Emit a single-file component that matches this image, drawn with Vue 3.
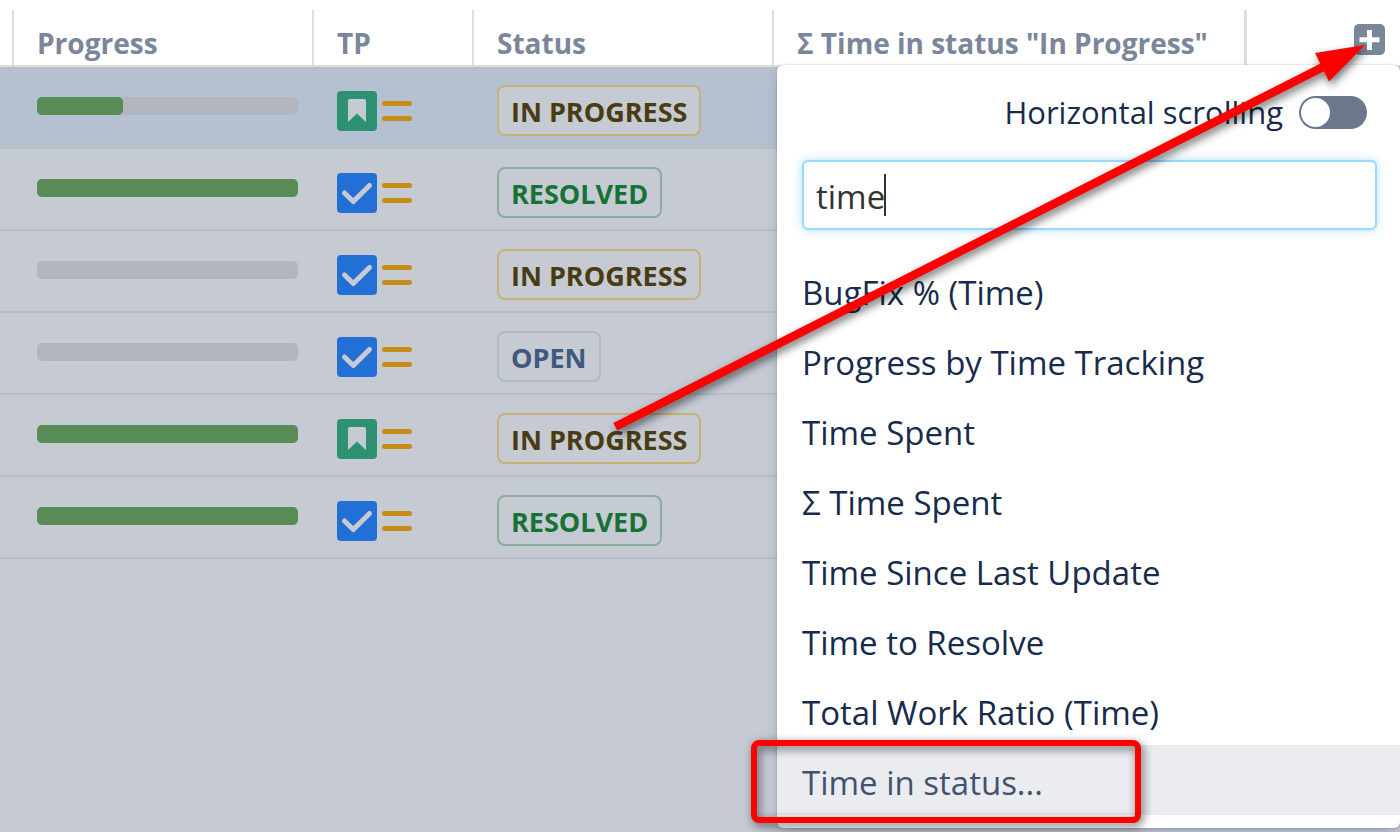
<template>
  <div class="board">
    <table class="issues">
      <colgroup>
        <col class="col-edge" />
        <col class="col-progress" />
        <col class="col-type" />
        <col class="col-status" />
        <col class="col-time" />
        <col />
      </colgroup>
      <thead>
        <tr>
          <th></th>
          <th scope="col">Progress</th>
          <th scope="col">TP</th>
          <th scope="col">Status</th>
          <th scope="col">Σ Time in status "In Progress"</th>
          <th class="add-cell">
            <button
              type="button"
              class="add-button"
              aria-label="Add column"
              @click="panelOpen = !panelOpen">
              <svg
                width="31"
                height="31"
                viewBox="0 0 31 31">
                <rect
                  width="31"
                  height="31"
                  rx="5"
                  fill="#7a869a" />
                <path
                  d="M15.500 6V26M5.500 15.800H25.500"
                  stroke="#fff"
                  stroke-width="5" />
              </svg>
            </button>
          </th>
        </tr>
      </thead>
      <tbody>
        <tr
          v-for="issue in issues"
          :key="issue.id"
          :class="{ selected: issue.id === selectedId }">
          <td></td>
          <td class="progress-cell">
            <div class="track">
              <div
                class="fill"
                :style="{ width: issue.progress + '%' }"></div>
            </div>
          </td>
          <td class="type-cell">
            <div class="icons">
              <svg
                v-if="issue.type === 'story'"
                width="40"
                height="40"
                viewBox="0 0 40 40">
                <rect
                  width="40"
                  height="40"
                  rx="4"
                  fill="#2e9272" />
                <path
                  d="M13 8H27A2 2 0 0 1 29 10V31L20 22.500L11 31V10A2 2 0 0 1 13 8Z"
                  fill="#c6cad3" />
              </svg>
              <svg
                v-else
                width="40"
                height="40"
                viewBox="0 0 40 40">
                <rect
                  width="40"
                  height="40"
                  rx="4"
                  fill="#226fd5" />
                <path
                  d="M7.500 20L16.300 28.500L32.500 12.500"
                  fill="none"
                  stroke="#c6cad3"
                  stroke-width="5"
                  stroke-linecap="round"
                  stroke-linejoin="round" />
              </svg>
              <svg
                width="30"
                height="20"
                viewBox="0 0 30 20">
                <rect
                  width="30"
                  height="5"
                  rx="2.500"
                  fill="#c68c13" />
                <rect
                  y="15"
                  width="30"
                  height="5"
                  rx="2.500"
                  fill="#c68c13" />
              </svg>
            </div>
          </td>
          <td class="status-cell">
            <span
              class="badge"
              :class="issue.status.toLowerCase().replace(' ', '-')">
              {{ issue.status }}
            </span>
          </td>
          <td></td>
          <td></td>
        </tr>
      </tbody>
    </table>

    <div
      v-show="panelOpen"
      class="panel">
      <div class="scrolling">
        <label for="horizontal-scrolling">Horizontal scrolling</label>
        <input
          id="horizontal-scrolling"
          v-model="horizontalScrolling"
          class="toggle"
          type="checkbox"
          role="switch" />
      </div>
      <div class="search">
        <input
          v-model="query"
          class="search-input"
          type="text"
          aria-label="Search columns" />
        <span class="caret"></span>
      </div>
      <ul class="options">
        <li
          v-for="column in matches"
          :key="column"
          class="option"
          :class="{ active: column === activeColumn }">
          <button type="button">{{ column }}</button>
          <span
            v-if="column === activeColumn"
            class="marker"></span>
        </li>
      </ul>
    </div>

    <svg
      class="arrow"
      width="1400"
      height="832"
      viewBox="0 0 1400 832">
      <path
        d="M615.300 426.700L1324 66.500"
        stroke="#f00"
        stroke-width="8.500" />
      <path
        d="M1365 45L1315 53L1329 81.500Z"
        fill="#f00" />
    </svg>
  </div>
</template>

<script setup>
  import { ref, computed } from "vue";

  const issues = [
    { id: 1, progress: 33, type: "story", status: "IN PROGRESS" },
    { id: 2, progress: 100, type: "task", status: "RESOLVED" },
    { id: 3, progress: 0, type: "task", status: "IN PROGRESS" },
    { id: 4, progress: 0, type: "task", status: "OPEN" },
    { id: 5, progress: 100, type: "story", status: "IN PROGRESS" },
    { id: 6, progress: 100, type: "task", status: "RESOLVED" },
  ];

  const columns = [
    "BugFix % (Time)",
    "Progress by Time Tracking",
    "Time Spent",
    "Σ Time Spent",
    "Time Since Last Update",
    "Time to Resolve",
    "Total Work Ratio (Time)",
    "Time in status...",
  ];

  const selectedId = ref(1);
  const panelOpen = ref(true);
  const horizontalScrolling = ref(false);
  const query = ref("time");
  const activeColumn = ref("Time in status...");

  const matches = computed(() =>
    columns.filter((c) => c.toLowerCase().includes(query.value.toLowerCase())),
  );
</script>

<style>
  body {
    margin: 0;
    background: #c6cad3;
  }
</style>

<style scoped>
  .board {
    position: relative;
    min-height: 100vh;
    overflow: hidden;
    box-sizing: border-box;
    border-top: 10px solid #fff;
    background: #c6cad3;
    font-family: "Open Sans", "Noto Sans", sans-serif;
  }

  .issues {
    width: 100%;
    table-layout: fixed;
    border-collapse: separate;
    border-spacing: 0;
  }

  .col-edge {
    width: 12px;
  }

  .col-progress,
  .col-status {
    width: 300px;
  }

  .col-type {
    width: 160px;
  }

  .col-time {
    width: 472px;
  }

  th {
    height: 57px;
    box-sizing: border-box;
    padding: 12px 0 2px 23px;
    border-left: 2px solid #ddd;
    border-bottom: 2px solid #ddd;
    background: #fff;
    color: #7a869a;
    font-size: 28px;
    line-height: 40px;
    font-weight: 700;
    text-align: left;
    white-space: nowrap;
  }

  th:first-child {
    padding: 0;
    border-left: 0;
  }

  .add-cell {
    padding: 14px 15px 0 0;
    border-left-width: 3px;
    text-align: right;
    vertical-align: top;
  }

  .add-button {
    padding: 0;
    border: 0;
    background: none;
    cursor: pointer;
  }

  .add-button svg {
    display: block;
  }

  td {
    height: 82px;
    box-sizing: border-box;
    padding: 0;
    border-bottom: 2px solid #b8bdc6;
    vertical-align: top;
  }

  .selected td {
    background: #b5c0d1;
  }

  .progress-cell {
    padding: 30px 14px 0 25px;
  }

  .track {
    height: 18px;
    border-radius: 5px;
    background: #b1b6bf;
  }

  .fill {
    height: 100%;
    border-radius: 5px;
    background: #588b55;
  }

  .type-cell {
    padding: 24px 0 0 25px;
  }

  .icons {
    display: flex;
    align-items: center;
    gap: 5px;
  }

  .status-cell {
    padding: 18px 0 0 25px;
  }

  .badge {
    display: inline-block;
    box-sizing: border-box;
    padding: 2px 12px 0;
    border: 2px solid;
    border-radius: 8px;
    background: #c6cad3;
    font-size: 27px;
    line-height: 45px;
    font-weight: 700;
    white-space: nowrap;
  }

  .in-progress {
    border-color: #c6b178;
    color: #4a3c12;
  }

  .resolved {
    border-color: #8aae9b;
    color: #177335;
  }

  .open {
    border-color: #b1b8c6;
    color: #3f5a7d;
  }

  .panel {
    position: absolute;
    top: 55px;
    right: 0;
    width: 623px;
    box-sizing: border-box;
    padding: 17px 0 13px;
    border-radius: 6px;
    background: #fff;
    box-shadow:
      0 8px 16px -4px rgba(9, 30, 66, 0.25),
      0 0 2px rgba(9, 30, 66, 0.31);
  }

  .scrolling {
    display: flex;
    align-items: center;
    justify-content: flex-end;
    gap: 16px;
    height: 60px;
    padding-right: 33px;
    color: #172b4d;
    font-size: 31px;
  }

  .toggle {
    width: 68px;
    height: 33px;
    margin: 0;
    padding: 2px;
    box-sizing: border-box;
    appearance: none;
    border-radius: 17px;
    background: #6b778c;
    cursor: pointer;
  }

  .toggle::before {
    content: "";
    display: block;
    width: 29px;
    height: 29px;
    border-radius: 50%;
    background: #fff;
  }

  .toggle:checked::before {
    margin-left: auto;
  }

  .search {
    position: relative;
    margin: 18px 23px 25px 25px;
  }

  .search-input {
    display: block;
    width: 100%;
    height: 70px;
    box-sizing: border-box;
    padding: 3px 12px 0;
    border: 2px solid #99d8ff;
    border-radius: 6px;
    outline: 0;
    box-shadow: 0 0 8px rgba(102, 196, 255, 0.5);
    color: #333;
    font: 33px "Open Sans", "Noto Sans", sans-serif;
  }

  /* text cursor after the typed query */
  .caret {
    position: absolute;
    top: 14px;
    left: 82px;
    width: 2px;
    height: 42px;
    background: #333;
  }

  .options {
    margin: 0;
    padding: 0;
    list-style: none;
  }

  .option {
    position: relative;
  }

  .option button {
    display: block;
    width: 100%;
    height: 70px;
    padding: 4px 25px 0;
    border: 0;
    background: none;
    color: #172b4d;
    font: 33px "Open Sans", "Noto Sans", sans-serif;
    text-align: left;
    cursor: pointer;
  }

  .option.active button {
    background: #ebecf0;
    color: #42526e;
  }

  .marker {
    position: absolute;
    top: -5px;
    left: -26px;
    width: 390px;
    height: 83px;
    box-sizing: border-box;
    border: 6px solid #f00;
    border-radius: 8px;
    filter: drop-shadow(2px 3px 5px rgba(0, 0, 0, 0.6));
    pointer-events: none;
  }

  .arrow {
    position: absolute;
    top: -10px;
    right: 0;
    filter: drop-shadow(2px 4px 4px rgba(0, 0, 0, 0.55));
    pointer-events: none;
  }
</style>
